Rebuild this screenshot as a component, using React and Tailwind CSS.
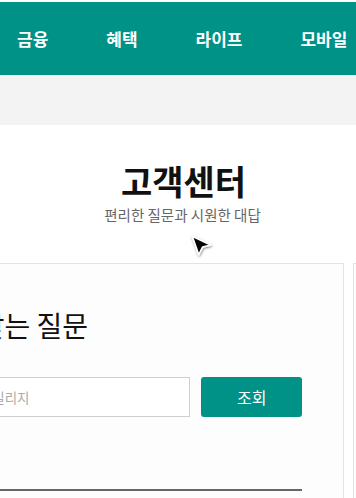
import React from "react";

export default function App() {
  const font = { fontFamily: '"Noto Sans CJK KR", "Noto Sans", sans-serif' };
  return (
    <div className="relative w-[356px] h-[498px] overflow-hidden bg-white" style={font}>
      <div className="h-[2px] bg-white" />
      <nav className="h-[73px] bg-[#009187] flex items-center pl-[17px] gap-[58px] text-white text-[17px] font-bold whitespace-nowrap">
        <span>금융</span>
        <span>혜택</span>
        <span>라이프</span>
        <span>모바일</span>
      </nav>
      <div className="h-[50px] bg-[#f3f3f3]" />
      <div className="flex flex-col items-center">
        <h1 className="mt-[35px] ml-[11px] text-[34px] leading-[42px] font-bold text-[#111]">고객센터</h1>
        <p className="mt-[3px] ml-[9px] text-[14.5px] leading-[20px] text-[#666]">편리한 질문과 시원한 대답</p>
      </div>
      <div className="mt-[38px] flex gap-[9px]">
        <div className="shrink-0 -ml-[123px] w-[467px] h-[300px] border border-[#e3e3e3] bg-[#fdfdfd] px-[41px] pt-[43px]">
          <h2 className="ml-[2px] text-[28px] leading-[36px] text-[#111] whitespace-nowrap">자주 찾는 질문</h2>
          <div className="mt-[34px] flex gap-[11px]">
            <div className="w-[272px] h-[40px] border border-[#cfcfcf] bg-white flex items-center justify-end pr-[160px] text-[13.5px] text-[#aaa] whitespace-nowrap">
              예) 마일리지
            </div>
            <button className="w-[101px] h-[40px] rounded-[3px] bg-[#009187] text-white text-[16px]">조회</button>
          </div>
          <div className="mt-[72px] h-[2px] bg-[#666]" />
        </div>
        <div className="shrink-0 w-[300px] h-[300px] border border-[#e3e3e3] bg-[#fdfdfd]" />
      </div>
      <svg className="absolute left-[189px] top-[233px]" width="26" height="26" viewBox="0 0 24 24">
        <defs>
          <filter id="sh" x="-50%" y="-50%" width="200%" height="200%">
            <feDropShadow dx="0.5" dy="1" stdDeviation="1" floodColor="#000" floodOpacity="0.5" />
          </filter>
        </defs>
        <path d="M3 3 L20 11 L12.5 13 L9 20 Z" fill="#000" stroke="#fff" strokeWidth="1.5" strokeLinejoin="round" filter="url(#sh)" />
      </svg>
    </div>
  );
}
